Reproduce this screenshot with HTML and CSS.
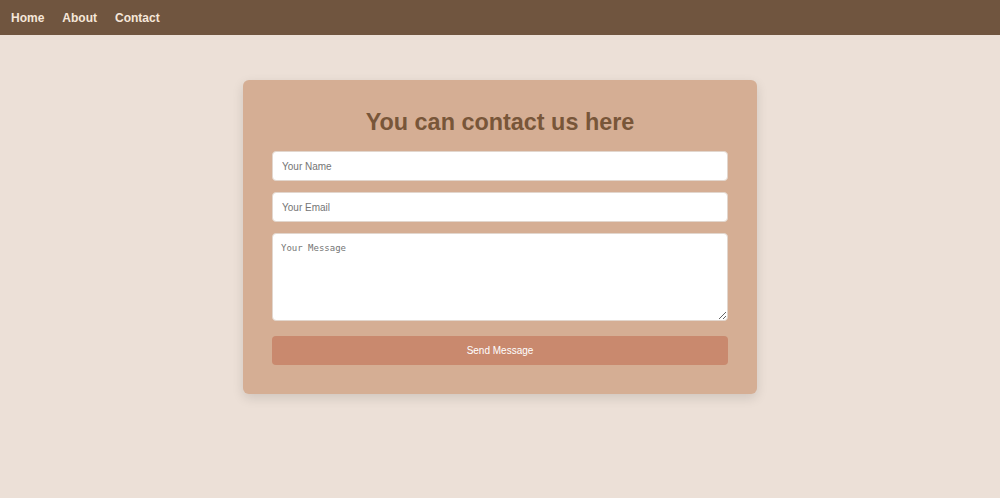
FILE: index.html
```html
<!DOCTYPE html>
<html lang="en">
<head>
<meta charset="utf-8">
<title>Contact</title>
<link rel="stylesheet" href="styles.css">
</head>
<body>
<nav class="nav">
  <a href="#" class="nav-link">Home</a>
  <a href="#" class="nav-link">About</a>
  <a href="#" class="nav-link">Contact</a>
</nav>
<main class="main">
  <form class="card">
    <h2 class="title">You can contact us here</h2>
    <input class="field" type="text" placeholder="Your Name">
    <input class="field" type="email" placeholder="Your Email">
    <textarea class="field area" placeholder="Your Message"></textarea>
    <button class="send" type="button">Send Message</button>
  </form>
</main>
</body>
</html>
```
FILE: styles.css
```css
* { box-sizing: border-box; }
html, body { margin: 0; padding: 0; }
body {
  background: #ece0d7;
  font-family: "Liberation Sans", Arial, sans-serif;
  height: 498px;
}
.nav {
  background: #70553f;
  height: 35px;
  display: flex;
  align-items: center;
  padding: 0 11px;
  gap: 18px;
}
.nav-link {
  color: #f6e7d9;
  text-decoration: none;
  font-weight: bold;
  font-size: 12px;
}
.main {
  display: flex;
  justify-content: center;
  padding-top: 45px;
}
.card {
  width: 514px;
  background: #d5ae94;
  border-radius: 6px;
  padding: 30px 29px 29px;
  box-shadow: 0 4px 12px rgba(0,0,0,0.12);
  display: flex;
  flex-direction: column;
}
.title {
  margin: 0 0 17px;
  text-align: center;
  color: #785639;
  font-size: 23.4px;
  line-height: 24px;
  font-weight: bold;
}
.field {
  display: block;
  width: 100%;
  height: 30px;
  margin: 0 0 11px;
  padding: 0 9px;
  border: 1px solid #e2d6cd;
  border-radius: 4px;
  background: #fff;
  font-family: "Liberation Sans", Arial, sans-serif;
  font-size: 10px;
  color: #333;
}
.field::placeholder { color: #757575; }
.area {
  height: 88px;
  padding: 9px 8px;
  font-family: "DejaVu Sans Mono", monospace;
  font-size: 9px;
  margin-bottom: 15px;
  resize: vertical;
}
.send {
  height: 29px;
  border: none;
  border-radius: 4px;
  background: #c9896e;
  color: #fff;
  font-family: "Liberation Sans", Arial, sans-serif;
  font-size: 10px;
}
```
